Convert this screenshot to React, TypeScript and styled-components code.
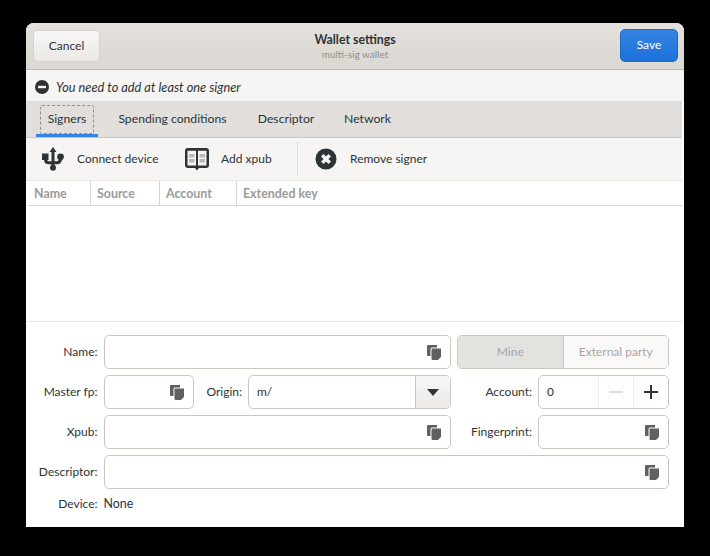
import React from "react";
import styled, { createGlobalStyle } from "styled-components";

const Global = createGlobalStyle`
  html, body { margin: 0; padding: 0; background: #000; }
  body { font-family: "Lato", "Noto Sans", sans-serif; font-size: 12px; line-height: 14px; color: #2e3436; }
  * { box-sizing: border-box; }
`;

const Page = styled.div`
  width: 710px;
  height: 556px;
  padding: 23px 26px 29px;
  background: #000;
`;
const Window = styled.div`
  height: 504px;
  display: flex;
  flex-direction: column;
  background: #fff;
  border-radius: 8px 8px 0 0;
  overflow: hidden;
`;
const Header = styled.header`
  height: 47px;
  flex: none;
  display: grid;
  grid-template-columns: 1fr auto 1fr;
  align-items: center;
  padding: 0 6px 1px 7px;
  background: linear-gradient(#e3e0dd, #dbd8d3);
  border-bottom: 1px solid #bfb8b1;
`;
const CancelButton = styled.button`
  justify-self: start;
  height: 32px;
  width: 67px;
  margin-top: 1px;
  padding: 0 0 1px;
  font: inherit;
  border-radius: 5px;
  border: 1px solid #d6d2cd;
  color: #2e3436;
  background: linear-gradient(#f8f7f6, #ebe8e5);
`;
const SaveButton = styled.button`
  justify-self: end;
  height: 33px;
  width: 58px;
  padding: 0 0 1px;
  font: inherit;
  border-radius: 5px;
  border: 1px solid #1b6acb;
  color: #fff;
  background: linear-gradient(#3584e4, #1c71d8);
`;
const TitleBox = styled.div`
  display: flex;
  flex-direction: column;
  align-items: center;
  padding: 2px 1px 0 0;
`;
const Title = styled.div`
  font-size: 12.300px;
  font-weight: 700;
  line-height: 16px;
`;
const Subtitle = styled.div`
  font-size: 10px;
  line-height: 13px;
  color: #8f908e;
`;
const Banner = styled.div`
  height: 31px;
  flex: none;
  display: flex;
  align-items: center;
  gap: 7px;
  padding: 2px 0 0 9px;
  background: #f6f5f4;
  font-style: italic;
  font-size: 12.800px;
`;
const Notebook = styled.div`
  height: 221px;
  flex: none;
  display: flex;
  flex-direction: column;
  margin-right: 2px;
  border-bottom: 1px solid #e8e6e4;
`;
const TabBar = styled.div`
  height: 37px;
  flex: none;
  display: flex;
  gap: 8px;
  padding-left: 10px;
  background: #e1dedb;
  border-bottom: 1px solid #cdc7c2;
`;
const Tab = styled.div<{ $active?: boolean; $w: number }>`
  position: relative;
  width: ${(p) => p.$w}px;
  height: 36px;
  padding-top: 2px;
  font-size: 12.200px;
  display: flex;
  align-items: center;
  justify-content: center;
  border-bottom: 3px solid ${(p) => (p.$active ? "#3584e4" : "transparent")};
  &::before {
    content: "";
    display: ${(p) => (p.$active ? "block" : "none")};
    position: absolute;
    inset: 4px 4px 0;
    border: 1px dashed #8f8f8d;
    border-radius: 2px;
  }
`;
const Toolbar = styled.div`
  height: 43px;
  flex: none;
  display: flex;
  align-items: center;
  background: #f6f5f4;
  border-bottom: 1px solid #e8e6e4;
`;
const ToolButton = styled.div<{ $w: number; $gap: number; $pad: number }>`
  width: ${(p) => p.$w}px;
  display: flex;
  align-items: center;
  gap: ${(p) => p.$gap}px;
  padding-left: ${(p) => p.$pad}px;
`;
const ToolSep = styled.div`
  width: 1px;
  height: 34px;
  background: #dedbd8;
`;
const TableHead = styled.div`
  height: 25px;
  flex: none;
  display: flex;
  margin-left: 2px;
  background: #fff;
  border-bottom: 1px solid #d8d6d4;
`;
const HeadCell = styled.div<{ $w?: number }>`
  ${(p) => (p.$w ? `width: ${p.$w}px; border-right: 1px solid #d8d6d4;` : "flex: 1;")}
  padding: 2px 0 0 6px;
  display: flex;
  align-items: center;
  font-size: 12.400px;
  font-weight: 700;
  color: #9a9b9a;
`;
const ListBody = styled.div`
  flex: 1;
  background: #fff;
`;
const Form = styled.div`
  display: grid;
  grid-template-columns: 71.500px 90.500px 42px 203px 75px 131px;
  grid-auto-rows: 34px 34px 34px 34px 18px;
  gap: 6px;
  padding: 13px 0 0;
  justify-content: start;
`;
const Label = styled.div`
  display: flex;
  align-items: center;
  justify-content: flex-end;
  white-space: nowrap;
`;
const Entry = styled.div<{ $span?: number }>`
  grid-column: span ${(p) => p.$span ?? 1};
  display: flex;
  align-items: center;
  justify-content: space-between;
  padding: 1px 9px 0;
  background: #fff;
  border: 1px solid #cdc7c2;
  border-radius: 5px;
  overflow: hidden;
`;
const Combo = styled(Entry)`
  padding: 0 0 0 8px;
`;
const ComboButton = styled.div`
  width: 35px;
  height: 100%;
  display: flex;
  align-items: center;
  justify-content: center;
  border-left: 1px solid #cdc7c2;
  background: linear-gradient(#f8f7f6, #ebe8e5);
`;
const Segment = styled.div`
  display: flex;
  border: 1px solid #cdc7c2;
  border-radius: 5px;
  overflow: hidden;
  grid-column: span 2;
  color: #a5a6a5;
`;
const SegmentPart = styled.div<{ $on?: boolean }>`
  width: ${(p) => (p.$on ? 106 : 105)}px;
  display: flex;
  align-items: center;
  justify-content: center;
  background: ${(p) => (p.$on ? "#e2e2df" : "#faf9f8")};
  border-right: ${(p) => (p.$on ? "1px solid #cdc7c2" : "none")};
`;
const Spin = styled.div`
  display: flex;
  border: 1px solid #cdc7c2;
  border-radius: 5px;
  overflow: hidden;
`;
const SpinValue = styled.div`
  width: 59px;
  padding-left: 8px;
  display: flex;
  align-items: center;
`;
const SpinButton = styled.div`
  width: 35px;
  display: flex;
  align-items: center;
  justify-content: center;
  border-left: 1px solid #eeedeb;
`;
const DeviceValue = styled.div`
  display: flex;
  align-items: center;
  font-size: 12.400px;
`;

const CopyIcon = () => (
  <svg width="14" height="15" viewBox="0 0 14 15" fill="#5e6160">
    <path d="M0 1a1 1 0 0 1 1-1h9v2.500H5a1.500 1.500 0 0 0-1.500 1.500v7H1a1 1 0 0 1-1-1z" />
    <path d="M4.500 4a.5.5 0 0 1 .5-.5h9v8.500l-3 3H5.500a1 1 0 0 1-1-1z" />
  </svg>
);
const MinusCircle = () => (
  <svg width="14" height="14" viewBox="0 0 14 14">
    <circle cx="7" cy="7" r="7" fill="#2e3436" />
    <rect x="3" y="5.800" width="8" height="2.400" fill="#f6f5f4" />
  </svg>
);
const UsbIcon = () => (
  <svg width="22" height="24" viewBox="0 0 22 24" fill="#2e3436">
    <path d="M11 0l3.500 5h-2v11h-3V5h-2z" />
    <circle cx="11" cy="20.800" r="3" />
    <rect x="9.500" y="15" width="3" height="4" />
    <path d="M0 6.500h6.500V13H5.300c.2 1 .8 1.300 2 1.300H10v3H7c-3.300 0-5-1.500-5-4.300H0z" />
    <circle cx="18.500" cy="9.800" r="3.400" />
    <path d="M16.800 11h3.400c0 4-2 6.300-5.200 6.300h-3v-3h3c1.200 0 1.800-1 1.800-3.300z" />
  </svg>
);
const BookIcon = () => (
  <svg width="24" height="24" viewBox="0 0 24 24">
    <path fill="#2e3436" d="M3 1h18a3 3 0 0 1 3 3v14a3 3 0 0 1-3 3h-7l-2 2.500L10 21H3a3 3 0 0 1-3-3V4a3 3 0 0 1 3-3z" />
    <path fill="#f6f5f4" d="M2.500 3.800h8.500v14.700H2.500zM13 3.800h8.500v14.700H13z" />
    <g fill="#b9b9b7">
      <rect x="4" y="7" width="5.500" height="3.500" />
      <rect x="4" y="12" width="5.500" height="3.500" />
      <rect x="14.500" y="7" width="5.500" height="3.500" />
      <rect x="14.500" y="12" width="5.500" height="3.500" />
    </g>
  </svg>
);
const XCircle = () => (
  <svg width="22" height="22" viewBox="0 0 22 22">
    <circle cx="11" cy="11" r="10.500" fill="#2e3436" />
    <path d="M7.300 7.300l7.400 7.400M14.700 7.300l-7.400 7.400" stroke="#f6f5f4" strokeWidth="3.600" />
  </svg>
);
const Caret = () => (
  <svg width="12" height="7" viewBox="0 0 12 7" fill="#2e3436">
    <path d="M0 0h12L6 7z" />
  </svg>
);
const Minus = () => (
  <svg width="16" height="16" viewBox="0 0 16 16" fill="#dcdcda">
    <rect x="1" y="7" width="14" height="2" />
  </svg>
);
const Plus = () => (
  <svg width="16" height="16" viewBox="0 0 16 16" fill="#2e3436">
    <path d="M1 7h6V1h2v6h6v2H9v6H7V9H1z" />
  </svg>
);

export default function App() {
  return (
    <Page>
      <Global />
      <Window>
        <Header>
          <CancelButton>Cancel</CancelButton>
          <TitleBox>
            <Title>Wallet settings</Title>
            <Subtitle>multi-sig wallet</Subtitle>
          </TitleBox>
          <SaveButton>Save</SaveButton>
        </Header>
        <Banner>
          <MinusCircle />
          You need to add at least one signer
        </Banner>
        <Notebook>
          <TabBar>
            <Tab $active $w={62}>Signers</Tab>
            <Tab $w={133}>Spending conditions</Tab>
            <Tab $w={78}>Descriptor</Tab>
            <Tab $w={69}>Network</Tab>
          </TabBar>
          <Toolbar>
            <ToolButton $w={159} $gap={13} $pad={16}>
              <UsbIcon />
              Connect device
            </ToolButton>
            <ToolButton $w={112} $gap={12} $pad={0}>
              <BookIcon />
              Add xpub
            </ToolButton>
            <ToolSep />
            <ToolButton $w={140} $gap={13} $pad={17}>
              <XCircle />
              Remove signer
            </ToolButton>
          </Toolbar>
          <TableHead>
            <HeadCell $w={63}>Name</HeadCell>
            <HeadCell $w={69}>Source</HeadCell>
            <HeadCell $w={77}>Account</HeadCell>
            <HeadCell>Extended key</HeadCell>
          </TableHead>
          <ListBody />
        </Notebook>
        <Form>
          <Label>Name:</Label>
          <Entry $span={3}><span /><CopyIcon /></Entry>
          <Segment>
            <SegmentPart $on>Mine</SegmentPart>
            <SegmentPart>External party</SegmentPart>
          </Segment>

          <Label>Master fp:</Label>
          <Entry><span /><CopyIcon /></Entry>
          <Label>Origin:</Label>
          <Combo>
            m/
            <ComboButton><Caret /></ComboButton>
          </Combo>
          <Label>Account:</Label>
          <Spin>
            <SpinValue>0</SpinValue>
            <SpinButton><Minus /></SpinButton>
            <SpinButton><Plus /></SpinButton>
          </Spin>

          <Label>Xpub:</Label>
          <Entry $span={3}><span /><CopyIcon /></Entry>
          <Label>Fingerprint:</Label>
          <Entry><span /><CopyIcon /></Entry>

          <Label>Descriptor:</Label>
          <Entry $span={5}><span /><CopyIcon /></Entry>

          <Label>Device:</Label>
          <DeviceValue>None</DeviceValue>
        </Form>
      </Window>
    </Page>
  );
}
